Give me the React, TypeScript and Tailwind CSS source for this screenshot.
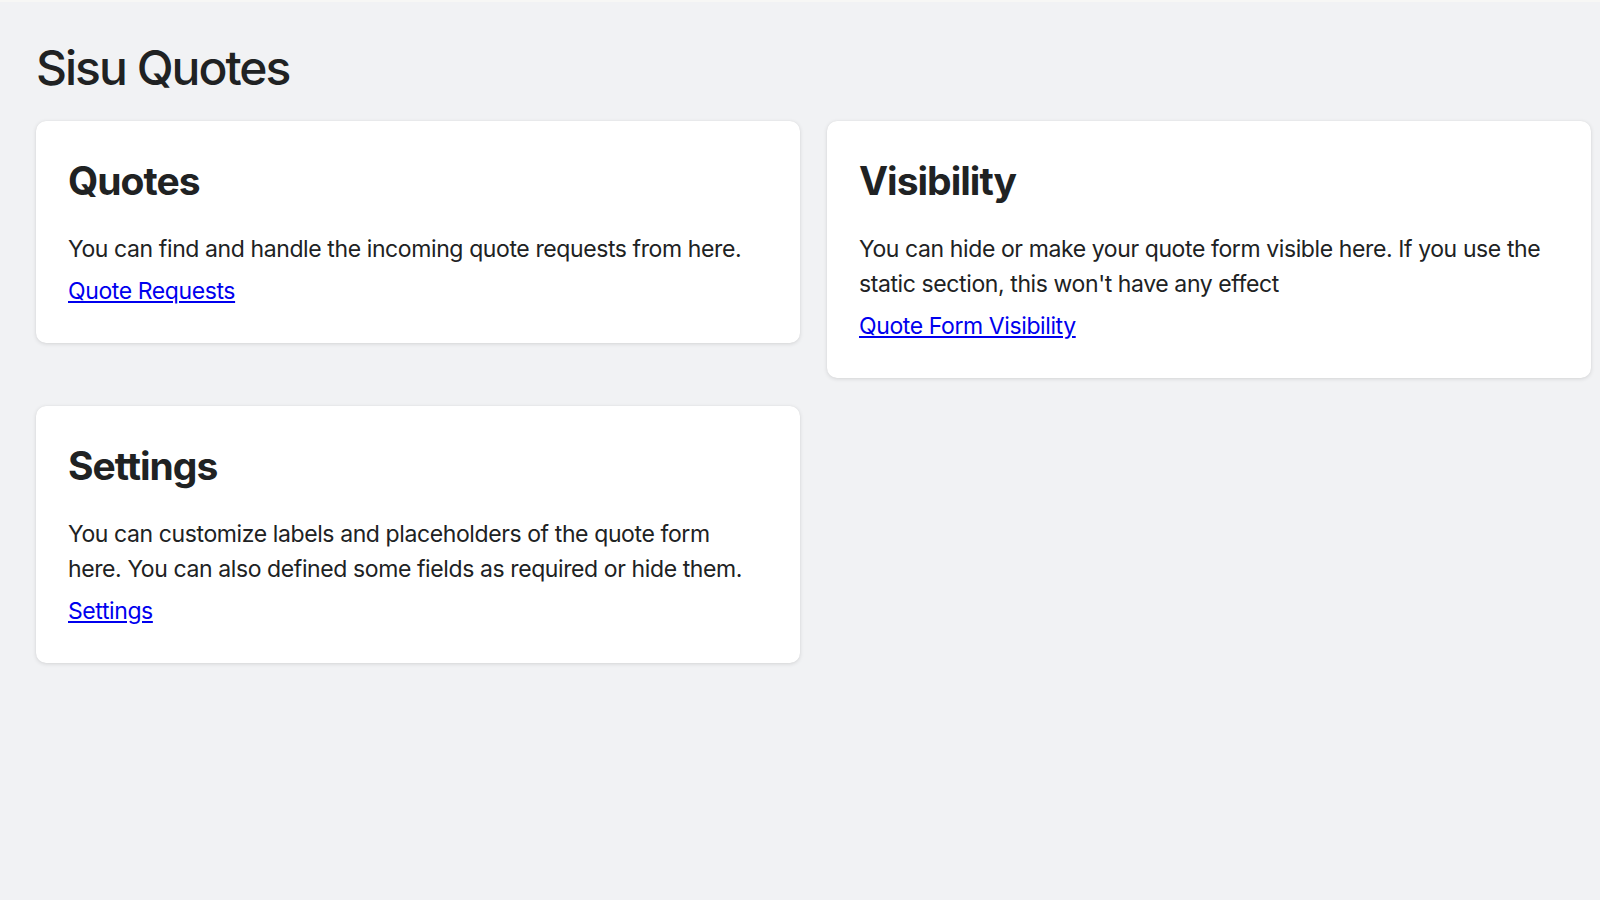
import React from "react";

function Card({ title, text, link }: { title: string; text: string; link: string }) {
  return (
    <div className="w-[764px] rounded-[10px] bg-white px-8 pt-9 pb-[34px] shadow-[0_1px_4px_0_rgba(0,0,0,0.12),0_0_1px_0_rgba(0,0,0,0.08)]">
      <h2 className="text-[39px] font-bold leading-[48px] tracking-[-1px] text-[#202223]">{title}</h2>
      <p className="mt-[27px] text-[23px] leading-[35px] tracking-[-0.4px] text-[#202223]">{text}</p>
      <a
        href="#"
        className="mt-[7px] block w-fit text-[23px] leading-[35px] tracking-[-0.4px] text-[#0000ee] underline"
      >
        {link}
      </a>
    </div>
  );
}

export default function App() {
  return (
    <div
      className="min-h-screen border-t-2 border-[#f7f7f5] bg-[#f1f2f4] pl-9"
      style={{ fontFamily: "Inter, 'Noto Sans', sans-serif" }}
    >
      <h1 className="pt-[37px] text-[48px] font-medium leading-[58px] tracking-[-2px] text-[#202223]">
        Sisu Quotes
      </h1>
      <div className="mt-[24px] grid grid-cols-[764px_764px] items-start gap-x-[27px] gap-y-[28px]">
        <Card
          title="Quotes"
          text="You can find and handle the incoming quote requests from here."
          link="Quote Requests"
        />
        <Card
          title="Visibility"
          text="You can hide or make your quote form visible here. If you use the static section, this won't have any effect"
          link="Quote Form Visibility"
        />
        <Card
          title="Settings"
          text="You can customize labels and placeholders of the quote form here. You can also defined some fields as required or hide them."
          link="Settings"
        />
      </div>
    </div>
  );
}
